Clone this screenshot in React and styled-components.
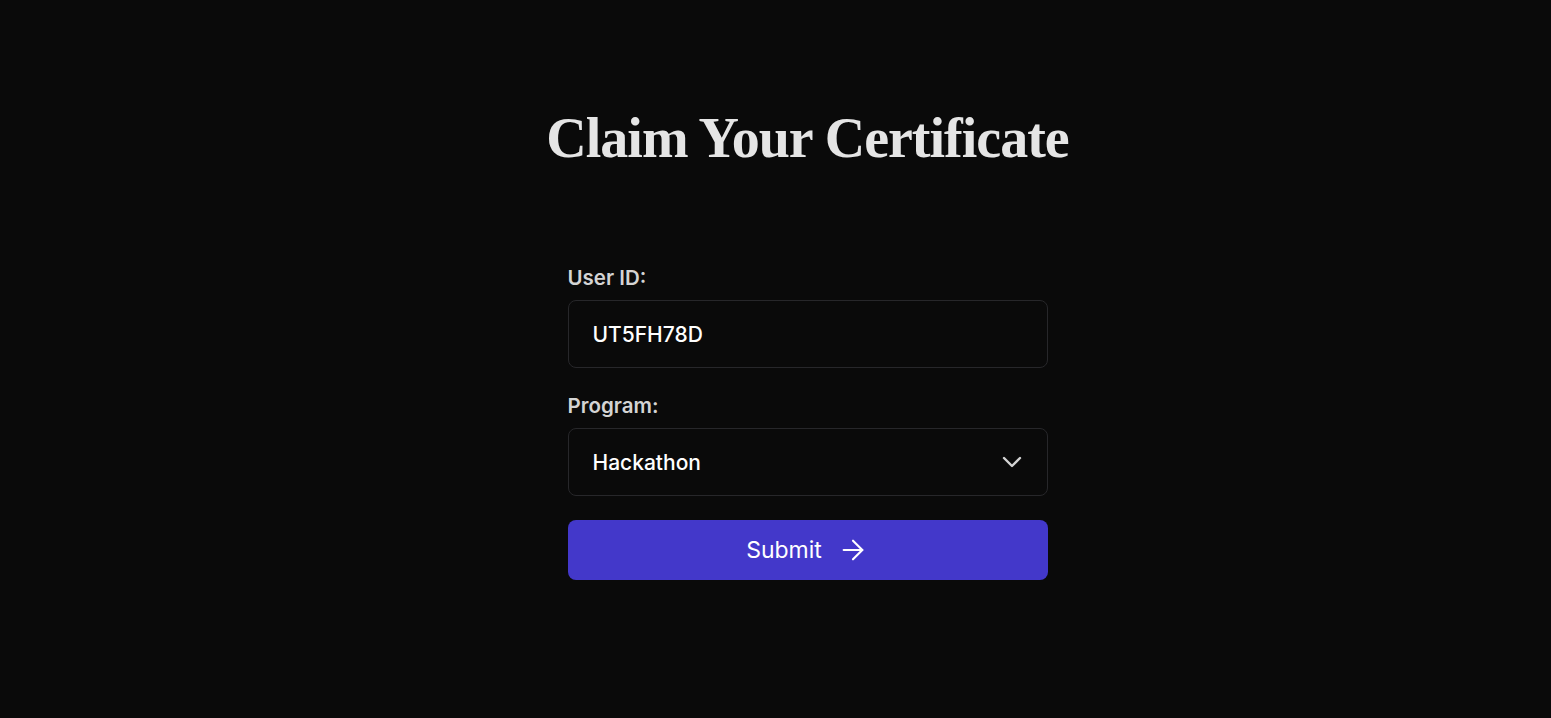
import React, { useState } from 'react'
import styled, { createGlobalStyle } from 'styled-components'
import { ChevronDown, ArrowRight } from 'lucide-react'

const GlobalStyle = createGlobalStyle`
  html, body {
    margin: 0;
    padding: 0;
    background: #0a0a0a;
    font-family: Inter, "Noto Sans", sans-serif;
  }
`

const Page = styled.main`
  min-height: 718px;
  display: flex;
  flex-direction: column;
  align-items: center;
  padding: 104px 0 0 64px;
  box-sizing: border-box;
`

const Title = styled.h1`
  margin: 0 0 94px;
  font-family: "Liberation Serif", "DejaVu Serif", serif;
  font-weight: 700;
  font-size: 56px;
  line-height: 68px;
  letter-spacing: -1px;
  color: #e5e5e5;
`

const Form = styled.form`
  width: 480px;
  display: flex;
  flex-direction: column;
  gap: 24px;
`

const Field = styled.div`
  display: flex;
  flex-direction: column;
  gap: 10px;

  & + & {
    margin-top: 2px;
  }
`

const Label = styled.label`
  font-size: 20.5px;
  line-height: 24px;
  font-weight: 600;
  color: #d4d4d4;
`

const Box = styled.div`
  position: relative;
  height: 68px;
  box-sizing: border-box;
  border: 1px solid #27272a;
  border-radius: 8px;
  background: #0a0a0a;
  display: flex;
  align-items: center;
`

const Input = styled.input`
  width: 100%;
  height: 100%;
  box-sizing: border-box;
  padding: 0 24px;
  background: transparent;
  border: none;
  outline: none;
  color: #ffffff;
  font-family: inherit;
  font-size: 21px;
  font-weight: 500;
`

const Select = styled.select`
  appearance: none;
  width: 100%;
  height: 100%;
  padding: 0 60px 0 24px;
  background: transparent;
  border: none;
  outline: none;
  color: #ffffff;
  font-family: inherit;
  font-size: 21px;
  font-weight: 500;
`

const Chevron = styled(ChevronDown)`
  position: absolute;
  right: 19px;
  top: 50%;
  transform: translateY(-50%);
  color: #d4d4d4;
  pointer-events: none;
`

const Button = styled.button`
  height: 60px;
  border: none;
  border-radius: 8px;
  background: #4338ca;
  color: #ffffff;
  font-family: inherit;
  font-size: 23px;
  font-weight: 400;
  display: flex;
  align-items: center;
  justify-content: center;
  gap: 15px;
  cursor: pointer;
`

export default function App() {
  const [userId, setUserId] = useState('UT5FH78D')
  const [program, setProgram] = useState('Hackathon')

  return (
    <Page>
      <GlobalStyle />
      <Title>Claim Your Certificate</Title>
      <Form onSubmit={(e) => e.preventDefault()}>
        <Field>
          <Label htmlFor='user-id'>User ID:</Label>
          <Box>
            <Input
              id='user-id'
              value={userId}
              onChange={(e) => setUserId(e.target.value)}
            />
          </Box>
        </Field>
        <Field>
          <Label htmlFor='program'>Program:</Label>
          <Box>
            <Select
              id='program'
              value={program}
              onChange={(e) => setProgram(e.target.value)}
            >
              <option>Hackathon</option>
              <option>Bootcamp</option>
              <option>Workshop</option>
            </Select>
            <Chevron size={32} strokeWidth={1.8} />
          </Box>
        </Field>
        <Button type='submit'>
          Submit
          <ArrowRight size={32} strokeWidth={1.6} />
        </Button>
      </Form>
    </Page>
  )
}
